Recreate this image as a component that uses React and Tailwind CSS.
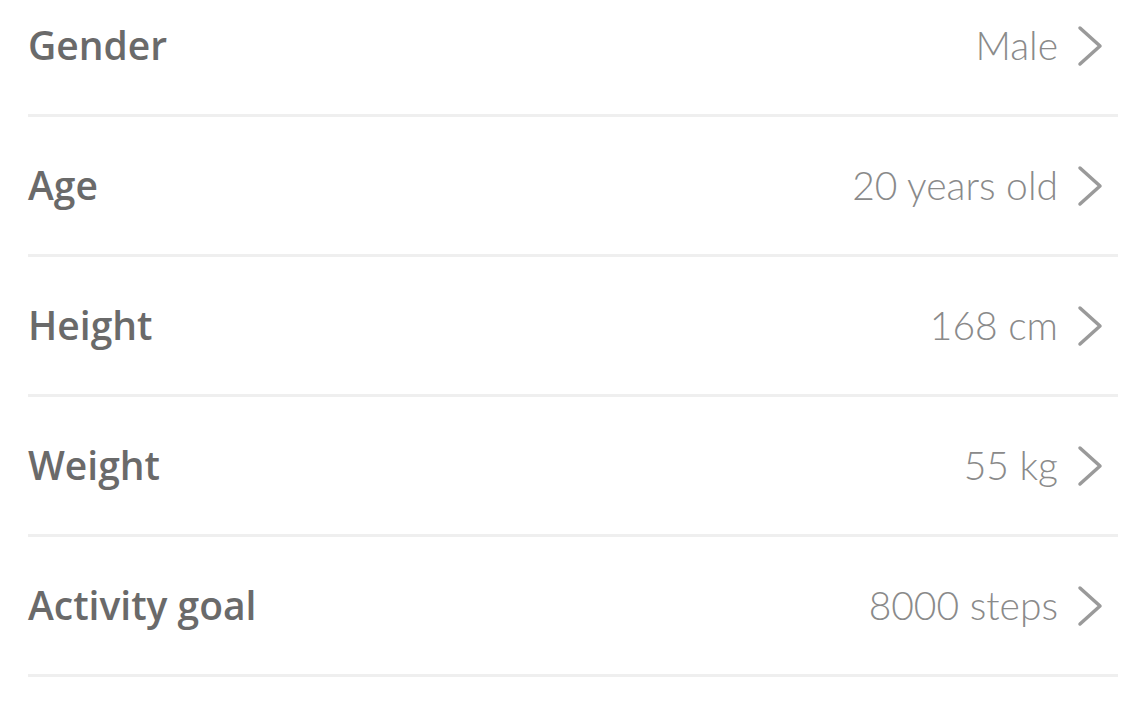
import React from "react";

const rows = [
  ["Gender", "Male"],
  ["Age", "20 years old"],
  ["Height", "168 cm"],
  ["Weight", "55 kg"],
  ["Activity goal", "8000 steps"],
];

function Chevron() {
  return (
    <svg width="28" height="44" viewBox="0 0 28 44" className="shrink-0">
      <path d="M4 4 L24 22 L4 40" fill="none" stroke="#9a9a9a" strokeWidth="3.5" strokeLinecap="round" strokeLinejoin="round" />
    </svg>
  );
}

export default function App() {
  return (
    <div className="w-[1146px] h-[716px] overflow-hidden bg-white">
      <div className="-mt-[23px] pl-[28px] pr-[28px]">
        {rows.map(([label, value]) => (
          <div key={label} className="flex items-center justify-between h-[140px] border-b-[3px] border-[#efefef]">
            <span className="text-[39px] font-semibold text-[#6a6a6a]" style={{ fontFamily: '"Open Sans", sans-serif' }}>
              {label}
            </span>
            <div className="flex items-center gap-[18px] pr-[14px]">
              <span className="text-[39px] font-light text-[#8a8a8a]" style={{ fontFamily: 'Lato, sans-serif' }}>
                {value}
              </span>
              <Chevron />
            </div>
          </div>
        ))}
      </div>
    </div>
  );
}
